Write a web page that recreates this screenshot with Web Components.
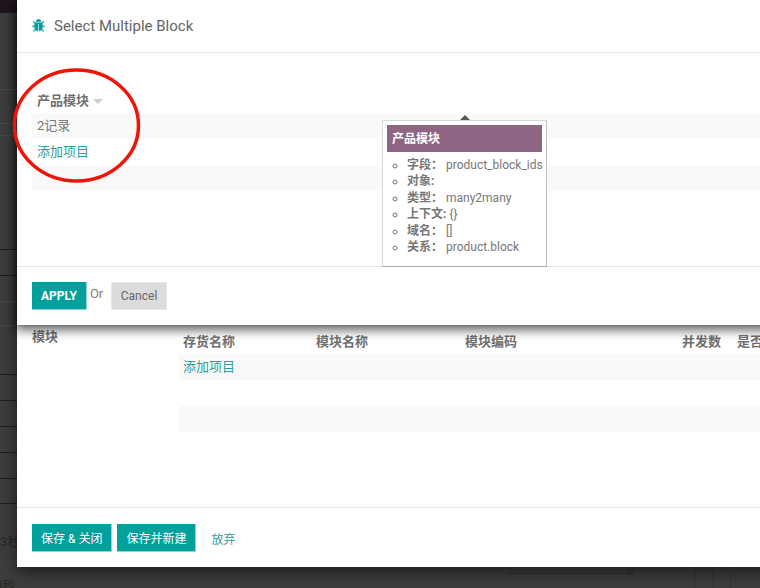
<!DOCTYPE html>
<html>
<head>
<meta charset="utf-8">
<title>Select Multiple Block</title>
<style>
  html, body { margin: 0; height: 588px; overflow: hidden; background: #3d3d3d; }
  body { position: relative; font: 13px Roboto, "Noto Sans CJK SC", sans-serif; color: #707070; }
</style>
</head>
<body>
<x-backdrop></x-backdrop>

<x-dialog style="--dialog-height: 567px">
  <x-form-row label="模块">
    <x-list-table columns="133px 149px 217px 55px 60px" add-text="添加项目" empty="true">
      <span>存货名称</span><span>模块名称</span><span>模块编码</span><span>并发数</span><span>是否</span>
    </x-list-table>
  </x-form-row>
  <x-button slot="footer" primary>保存 &amp; 关闭</x-button>
  <x-button slot="footer" primary>保存并新建</x-button>
  <x-button slot="footer" link>放弃</x-button>
</x-dialog>

<x-dialog style="--dialog-height: 325px" heading="Select Multiple Block" front>
  <x-list-table columns="1fr" add-text="添加项目" count="2记录" arrow>
    <span>产品模块</span>
  </x-list-table>
  <x-button slot="footer" primary upper>Apply</x-button>
  <x-or slot="footer">Or</x-or>
  <x-button slot="footer" muted>Cancel</x-button>
</x-dialog>

<x-field-tooltip heading="产品模块">
  <li><b>字段：</b> product_block_ids</li>
  <li><b>对象:</b></li>
  <li><b>类型：</b> many2many</li>
  <li><b>上下文:</b> {}</li>
  <li><b>域名：</b> []</li>
  <li><b>关系：</b> product.block</li>
</x-field-tooltip>

<x-annotation></x-annotation>

<script>
const BUG = 'M1632 928q0 26-19 45t-45 19h-224q0 171-67 290l208 209q19 19 19 45t-19 45q-18 19-45 19t-45-19l-198-197q-5 5-15 13t-42 28.5-65 36.5-82 29-97 13v-896h-128v896q-51 0-101.5-13.5t-87-33-66-39-43.5-32.5l-15-14-183 207q-20 21-48 21-24 0-43-16-19-18-20.5-44.5t15.5-46.5l202-227q-58-114-58-274h-224q-26 0-45-19t-19-45 19-45 45-19h224v-294l-173-173q-19-19-19-45t19-45 45-19 45 19l173 173h844l173-173q19-19 45-19t45 19 19 45-19 45l-173 173v294h224q26 0 45 19t19 45zm-480-576h-640q0-133 93.5-226.5t226.5-93.5 226.5 93.5 93.5 226.5z';

class XBackdrop extends HTMLElement {
  constructor() {
    super();
    this.attachShadow({ mode: 'open' });
    // bottom edge of each row of the page behind the dialogs
    const rows = [[90,'#4a4a4a'],[124,'#4a4a4a'],[136,'#4a4a4a'],[250,'#1f1f1f'],[276,'#1f1f1f'],[302,'#4a4a4a'],[326,'#4a4a4a'],[375,'#1f1f1f'],[401,'#1f1f1f'],[427,'#1f1f1f'],[453,'#1f1f1f'],[479,'#1f1f1f'],[504,'#1f1f1f']];
    let last = 13;
    const html = rows.map(([y, c]) => {
      const h = y - last; last = y;
      return `<div style="height:${h - 1}px;border-bottom:1px solid ${c}"></div>`;
    }).join('');
    this.shadowRoot.innerHTML = `
      <style>
        :host { display: block; height: 588px; background: #3d3d3d; color: #262626; font-size: 13px; overflow: hidden; }
        .top { height: 13px; background: #21141e; }
        .time { height: 18px; margin-top: 29px; line-height: 18px; }
        .time.zero { margin-top: 26px; margin-left: -5px; }
        .foot { position: absolute; top: 567px; left: 0; right: 0; height: 21px; pointer-events: none; }
        .foot i { position: absolute; top: 6px; left: 507px; width: 126px; border-top: 1px solid #2c2c2c; }
        .foot b { position: absolute; top: 0; width: 1px; height: 21px; background: #363636; }
        .grip { position: absolute; left: 626px; top: 1px; }
      </style>
      <div class="top"></div>
      ${html}
      <div class="time">3秒</div>
      <div class="time zero">0秒</div>
      <div class="foot">
        <i></i><b style="left:695px"></b><b style="left:712px"></b><b style="left:730px"></b>
        <svg class="grip" width="10" height="6" viewBox="0 0 10 6"><path d="M1 5L4 1M5 5L8 1" stroke="#222" stroke-width="1"/></svg>
      </div>`;
  }
}

class XDialog extends HTMLElement {
  constructor() {
    super();
    this.attachShadow({ mode: 'open' });
  }
  connectedCallback() {
    const heading = this.getAttribute('heading');
    this.shadowRoot.innerHTML = `
      <style>
        :host { position: absolute; left: 17px; top: 0; width: 800px; height: var(--dialog-height); display: flex; flex-direction: column; background: #fff; box-shadow: 0 5px 15px rgba(0,0,0,.55); }
        :host([front]) { box-shadow: 0 0 2px rgba(0,0,0,.3), 0 4px 10px 1px rgba(0,0,0,.62); }
        header { flex: none; box-sizing: border-box; display: flex; align-items: center; padding-left: 15px; border-bottom: 1px solid #e5e5e5; height: 53px; }
        header svg { width: 13px; height: 14px; fill: #00a09d; stroke: #00a09d; stroke-width: 50; margin-right: 9px; overflow: visible; }
        h4 { margin: 0; font-size: 15px; font-weight: 400; color: #666; line-height: 20px; }
        main { flex: 1; min-height: 0; padding: 0 15px; }
        :host(:not([front])) main { padding-top: 330px; }
        :host([front]) main { padding-top: 36px; }
        footer { flex: none; display: flex; align-items: flex-start; padding: 16px 15px 0; box-sizing: border-box; border-top: 1px solid #e5e5e5; height: 60px; }
        :host([front]) footer { padding-top: 15px; height: 59px; }
      </style>
      ${heading ? `<header><svg viewBox="0 0 1664 1792"><path d="${BUG}"/></svg><h4>${heading}</h4></header>` : ''}
      <main><slot></slot></main>
      <footer><slot name="footer"></slot></footer>`;
  }
}

class XButton extends HTMLElement {
  constructor() {
    super();
    this.attachShadow({ mode: 'open' });
    this.shadowRoot.innerHTML = `
      <style>
        :host { display: inline-flex; align-items: center; justify-content: center; height: 28px; box-sizing: border-box; padding: 0 9px; font-size: 12px; border: 1px solid transparent; white-space: nowrap; }
        :host([primary]) { background: #00a09d; color: #fff; border-color: #8fd6d4; border-width: 0 1px 1px 0; margin-right: 5px; }
        :host([upper]) { text-transform: uppercase; font-weight: 700; margin-right: 0; padding: 0 9px; }
        :host([muted]) { background: #dcdcdc; color: #666; padding: 0 8.5px; border-color: #e6e6e6; }
        :host([link]) { color: #2f9c9a; padding: 0 9px; }
      </style>
      <slot></slot>`;
  }
}

class XOr extends HTMLElement {
  constructor() {
    super();
    this.attachShadow({ mode: 'open' });
    this.shadowRoot.innerHTML = `
      <style>
        :host { display: block; color: #808080; font-size: 13px; line-height: 24px; margin: 0 8px 0 3px; }
      </style>
      <slot></slot>`;
  }
}

class XFormRow extends HTMLElement {
  constructor() {
    super();
    this.attachShadow({ mode: 'open' });
  }
  connectedCallback() {
    this.shadowRoot.innerHTML = `
      <style>
        :host { display: grid; grid-template-columns: 147px 1fr; }
        .lbl { font-weight: 700; color: #707070; line-height: 16px; margin-top: -1px; }
      </style>
      <div class="lbl">${this.getAttribute('label')}</div>
      <div><slot></slot></div>`;
  }
}

class XListTable extends HTMLElement {
  constructor() {
    super();
    this.attachShadow({ mode: 'open' });
  }
  connectedCallback() {
    const count = this.getAttribute('count');
    const add = this.getAttribute('add-text');
    const arrow = this.hasAttribute('arrow') ? '<i class="arrow"></i>' : '';
    const first = count
      ? `<div class="row odd pad">${count}</div><div class="row pad link">${add}</div><div class="row odd"></div>`
      : `<div class="row odd link">${add}</div><div class="row"></div><div class="row odd"></div>`;
    this.shadowRoot.innerHTML = `
      <style>
        :host { display: block; --pad: 4px; margin-top: 2px; }
        :host([count]) { --pad: 5px; margin-top: 0; }
        .head { display: grid; grid-template-columns: ${this.getAttribute('columns')}; height: 22px; line-height: 19px; font-weight: 700; color: #707070; padding-left: var(--pad); position: relative; }
        :host([count]) .head { line-height: 23px; height: 24px; }
        .arrow { display: inline-block; position: absolute; left: 61px; top: 10px; border: 5px solid transparent; border-top-color: #ccc; border-bottom-width: 0; }
        .rows { box-shadow: inset 0 5px 4px -4px rgba(0,0,0,.07); }
        .row { height: 26px; line-height: 26px; padding-left: var(--pad); color: #777; }
        .odd { background: #f9f9f9; }
        .row.link { color: #2a9d9b; }
        ::slotted(span) { white-space: nowrap; }
      </style>
      <div class="head"><slot></slot>${arrow}</div>
      <div class="rows">${first}</div>`;
  }
}

class XFieldTooltip extends HTMLElement {
  constructor() {
    super();
    this.attachShadow({ mode: 'open' });
  }
  connectedCallback() {
    this.shadowRoot.innerHTML = `
      <style>
        :host { position: absolute; left: 382px; top: 120px; width: 165px; height: 147px; box-sizing: border-box; padding: 4px; background: #fff; border: 1px solid #d8d8d8; border-bottom-color: #a8a8a8; border-right-color: #bbb; font-size: 12px; color: #777; }
        .arrow { position: absolute; left: 77px; top: -6px; border: 5px solid transparent; border-bottom-color: #555; border-top-width: 0; }
        h5 { margin: 0; height: 27px; line-height: 28px; padding-left: 5px; background: #8f6583; color: #fff; font-size: 12px; font-weight: 700; }
        ul { margin: 4.5px 0 0; padding: 0 0 0 20px; list-style: circle; line-height: 16.6px; white-space: nowrap; }
        ::slotted(li) { color: #777; }
      </style>
      <i class="arrow"></i>
      <h5>${this.getAttribute('heading')}</h5>
      <ul><slot></slot></ul>`;
  }
}

class XAnnotation extends HTMLElement {
  constructor() {
    super();
    this.attachShadow({ mode: 'open' });
    this.shadowRoot.innerHTML = `
      <style>
        :host { position: absolute; left: 10px; top: 65px; width: 134px; height: 122px; pointer-events: none; }
        svg { display: block; }
      </style>
      <svg width="134" height="122" viewBox="0 0 134 122"><ellipse cx="66.5" cy="60.5" rx="62" ry="55.5" fill="none" stroke="#f01408" stroke-width="3.5"/></svg>`;
  }
}

customElements.define('x-backdrop', XBackdrop);
customElements.define('x-dialog', XDialog);
customElements.define('x-button', XButton);
customElements.define('x-or', XOr);
customElements.define('x-form-row', XFormRow);
customElements.define('x-list-table', XListTable);
customElements.define('x-field-tooltip', XFieldTooltip);
customElements.define('x-annotation', XAnnotation);
</script>
</body>
</html>
